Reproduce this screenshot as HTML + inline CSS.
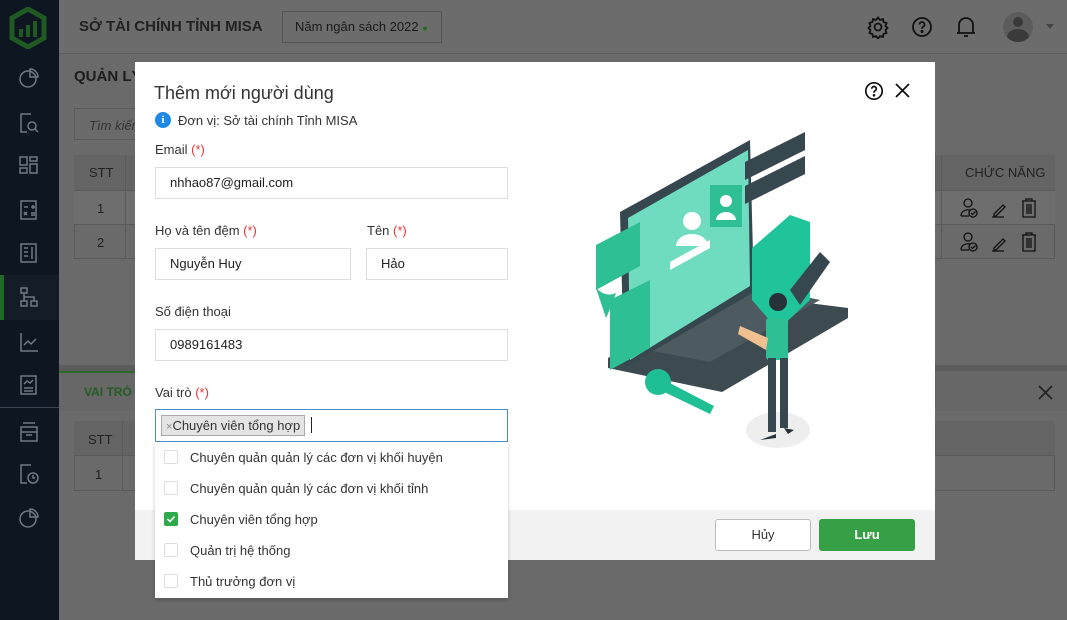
<!DOCTYPE html>
<html><head><meta charset="utf-8"><style>
*{box-sizing:border-box;margin:0;padding:0}
body{width:1067px;height:620px;overflow:hidden;position:relative;background:#6a6a6a;font-family:"Liberation Sans","Noto Sans CJK SC",sans-serif;color:#222}
.a{position:absolute}
.sb{left:0;top:0;width:59px;height:620px;background:#0e1622}
.ic{position:absolute;left:18px;width:22px;height:22px}
.hdr{left:59px;top:0;width:1008px;height:54px;background:#6c6c6c;border-bottom:1px solid #5e5e5e}
.modal{left:135px;top:62px;width:800px;height:498px;background:#fff}
.lbl{font-size:13px;color:#333}
.req{color:#e53935}
.inp{position:absolute;height:32px;border:1px solid #ddd;font-size:13px;padding-left:14px;line-height:30px;color:#222}
.dd{left:155px;top:442px;width:353px;height:156px;background:#fff;box-shadow:0 2px 4px rgba(0,0,0,.2)}
.opt{position:absolute;left:0;height:31px;width:100%;font-size:13px;color:#333;line-height:31px;padding-left:35px}
.cb{position:absolute;left:9px;top:8px;width:14px;height:14px;border:1px solid #ddd;border-radius:2px}
.btn{position:absolute;top:519px;width:96px;height:32px;border-radius:3px;font-size:13px;text-align:center;line-height:30px}
</style></head><body>
<div class="a sb">
 <svg class="a" style="left:9px;top:7px" width="38" height="42" viewBox="0 0 38 42"><path d="M19 2 L35 11 V31 L19 40 L3 31 V11 Z" fill="none" stroke="#1f5a22" stroke-width="5"/><path d="M12 30 V22 M19 30 V18 M26 30 V14" stroke="#1f5a22" stroke-width="4"/></svg>
 <g></g>
 <svg class="ic" style="top:67px" viewBox="0 0 22 22" fill="none" stroke="#6f7a84" stroke-width="1.5"><circle cx="10" cy="12" r="8"/><path d="M12 2 A8 8 0 0 1 20 10 H12Z"/></svg>
 <svg class="ic" style="top:112px" viewBox="0 0 22 22" fill="none" stroke="#6f7a84" stroke-width="1.5"><path d="M13 2H3V20H9"/><circle cx="14" cy="14" r="4"/><path d="M17 17L20 20"/></svg>
 <svg class="ic" style="top:155px" viewBox="0 0 22 22" fill="none" stroke="#6f7a84" stroke-width="1.5"><rect x="2" y="2" width="7" height="8"/><rect x="12" y="2" width="7" height="4"/><rect x="2" y="13" width="7" height="5"/><rect x="12" y="9" width="7" height="9"/></svg>
 <svg class="ic" style="top:199px" viewBox="0 0 22 22" fill="none" stroke="#6f7a84" stroke-width="1.5"><rect x="3" y="2" width="15" height="18"/><path d="M6 8h4M13 8h4M15 6v4M6 13l3 3M9 13l-3 3M13 14h4M13 16h4"/></svg>
 <svg class="ic" style="top:242px" viewBox="0 0 22 22" fill="none" stroke="#6f7a84" stroke-width="1.5"><rect x="3" y="2" width="15" height="18"/><path d="M6 6h4M6 10h4M6 14h4M14 5v12"/></svg>
 <div class="a" style="left:0;top:275px;width:59px;height:45px;background:#141c28;border-left:4px solid #1f6a28"></div>
 <svg class="ic" style="top:286px" viewBox="0 0 22 22" fill="none" stroke="#6f7a84" stroke-width="1.5"><rect x="3" y="2" width="6" height="5"/><rect x="3" y="15" width="6" height="5"/><rect x="13" y="15" width="6" height="5"/><path d="M6 7v8M6 11h10v4"/></svg>
 <svg class="ic" style="top:331px" viewBox="0 0 22 22" fill="none" stroke="#6f7a84" stroke-width="1.5"><path d="M3 2V20H20M6 14l4-4 3 3 5-5"/></svg>
 <svg class="ic" style="top:374px" viewBox="0 0 22 22" fill="none" stroke="#6f7a84" stroke-width="1.5"><rect x="3" y="2" width="15" height="18"/><path d="M6 10l3-3 3 2 3-3M6 14h9M6 17h9"/></svg>
 <div class="a" style="left:0;top:407px;width:59px;height:1px;background:#3a4450"></div>
 <svg class="ic" style="top:421px" viewBox="0 0 22 22" fill="none" stroke="#6f7a84" stroke-width="1.5"><path d="M3 6h16v14H3zM5 2h12M3 11h16M8 14h6"/></svg>
 <svg class="ic" style="top:463px" viewBox="0 0 22 22" fill="none" stroke="#6f7a84" stroke-width="1.5"><path d="M13 2H3V20H9"/><circle cx="15" cy="15" r="5"/><path d="M15 12v3h2"/></svg>
 <svg class="ic" style="top:507px" viewBox="0 0 22 22" fill="none" stroke="#6f7a84" stroke-width="1.5"><circle cx="10" cy="12" r="8"/><path d="M12 2 A8 8 0 0 1 20 10 H12Z"/></svg>
</div>
<div class="a hdr"></div>
<div class="a" style="left:79px;top:18px;font-size:15px;font-weight:bold;color:#222">SỞ TÀI CHÍNH TỈNH MISA</div>
<div class="a" style="left:282px;top:11px;width:160px;height:32px;border:1px solid #555;font-size:13px;line-height:30px;padding-left:12px;color:#1a1a1a">Năm ngân sách 2022 <span style="color:#1f6a1f;font-size:9px">●</span></div>
<svg class="a" style="left:866px;top:15px" width="24" height="24" viewBox="0 0 24 24" fill="none" stroke="#111" stroke-width="1.8"><circle cx="12" cy="12" r="3.5"/><path d="M12 2.5l2 2.5 3-1 .5 3 3 1-1 3 2 2-2 2 1 3-3 1-.5 3-3-1-2 2.5-2-2.5-3 1-.5-3-3-1 1-3-2-2 2-2-1-3 3-1 .5-3 3 1z"/></svg>
<svg class="a" style="left:910px;top:15px" width="24" height="24" viewBox="0 0 24 24" fill="none" stroke="#111" stroke-width="1.8"><circle cx="12" cy="12" r="9"/><path d="M9.5 9.5a2.5 2.5 0 1 1 3.5 2.3c-.8.4-1 1-1 2"/><circle cx="12" cy="16.5" r=".6" fill="#111"/></svg>
<svg class="a" style="left:954px;top:14px" width="24" height="26" viewBox="0 0 24 26" fill="none" stroke="#111" stroke-width="1.8"><path d="M5 19V11a7 7 0 0 1 14 0v8H5zM3 19h18M10 22h4"/></svg>
<div class="a" style="left:1003px;top:12px;width:30px;height:30px;border-radius:50%;background:#5c5c5c;overflow:hidden"><div class="a" style="left:10px;top:5px;width:10px;height:10px;border-radius:50%;background:#3a3a3a"></div><div class="a" style="left:4px;top:17px;width:22px;height:16px;border-radius:50%;background:#3a3a3a"></div></div>
<div class="a" style="left:1046px;top:24px;border:4px solid transparent;border-top:5px solid #444"></div>
<div class="a" style="left:74px;top:68px;font-size:15px;font-weight:bold;color:#1d1d1d">QUẢN LÝ</div>
<div class="a" style="left:74px;top:108px;width:90px;height:32px;border:1px solid #5a5a5a;font-size:13px;font-style:italic;color:#333;padding:9px 14px;white-space:nowrap">Tìm kiếm</div>
<div class="a" style="left:74px;top:155px;width:981px;height:104px;border:1px solid #5a5a5a"></div>
<div class="a" style="left:74px;top:155px;width:981px;height:35px;background:#646464"></div>
<div class="a" style="left:74px;top:190px;width:981px;height:35px;background:#6e6e6e;border-top:1px solid #5a5a5a;border-bottom:1px solid #5a5a5a"></div>
<div class="a" style="left:125px;top:155px;width:1px;height:104px;background:#5a5a5a"></div>
<div class="a" style="left:941px;top:155px;width:1px;height:104px;background:#5a5a5a"></div>
<div class="a" style="left:89px;top:165px;font-size:13px;color:#222">STT</div>
<div class="a" style="left:97px;top:201px;font-size:13px;color:#222">1</div>
<div class="a" style="left:97px;top:235px;font-size:13px;color:#222">2</div>
<div class="a" style="left:965px;top:165px;font-size:13px;color:#222">CHỨC NĂNG</div>
<svg class="a" style="left:958px;top:196px" width="84" height="62" viewBox="0 0 84 62" fill="none" stroke="#111" stroke-width="1.3">
 <g id="r"><circle cx="10" cy="7" r="4"/><path d="M3 20a7 6 0 0 1 9-6"/><path d="M3 20h8"/><circle cx="15" cy="17" r="4"/><path d="M13 17l1.5 1.5 3-3"/>
 <path d="M36 18l9-9 2 2-9 9h-2z"/><path d="M34 21h12"/>
 <path d="M64 5h14M68 5v-2h6v2M65 5v16h12V5M69 8v10M71 8v10M73 8v10"/></g>
 <use href="#r" y="34"/>
</svg>
<div class="a" style="left:59px;top:365px;width:1008px;height:6px;background:#5c5c5c"></div>
<div class="a" style="left:59px;top:371px;width:1008px;height:40px;background:#676767"></div>
<div class="a" style="left:59px;top:371px;width:80px;height:2px;background:#2a6b2a"></div>
<div class="a" style="left:84px;top:385px;font-size:12px;font-weight:bold;color:#245c24">VAI TRÒ</div>
<svg class="a" style="left:1038px;top:385px" width="15" height="15" viewBox="0 0 15 15" stroke="#222" stroke-width="1.6"><path d="M1 1L14 14M14 1L1 14"/></svg>
<div class="a" style="left:74px;top:421px;width:981px;height:70px;border:1px solid #5a5a5a"></div>
<div class="a" style="left:74px;top:421px;width:981px;height:35px;background:#646464;border-bottom:1px solid #5a5a5a"></div>
<div class="a" style="left:122px;top:421px;width:1px;height:70px;background:#5a5a5a"></div>
<div class="a" style="left:88px;top:432px;font-size:13px;color:#222">STT</div>
<div class="a" style="left:95px;top:467px;font-size:13px;color:#222">1</div>

<div class="a modal"></div>
<div class="a" style="left:135px;top:510px;width:800px;height:50px;background:#f2f2f2"></div>
<div class="a" style="left:154px;top:83px;font-size:18px;color:#333">Thêm mới người dùng</div>
<svg class="a" style="left:864px;top:81px" width="20" height="20" viewBox="0 0 20 20" fill="none" stroke="#111" stroke-width="1.7"><circle cx="10" cy="10" r="8.2"/><path d="M7.7 7.8a2.3 2.3 0 1 1 3.2 2.1c-.7.3-.9.9-.9 1.8"/><circle cx="10" cy="14.3" r=".5" fill="#111"/></svg>
<svg class="a" style="left:894px;top:82px" width="17" height="17" viewBox="0 0 17 17" stroke="#111" stroke-width="1.8"><path d="M2 2L15 15M15 2L2 15"/></svg>
<div class="a" style="left:155px;top:112px;width:16px;height:16px;border-radius:50%;background:#1e88e5;color:#fff;font-size:11px;font-weight:bold;text-align:center;line-height:16px;font-family:'Liberation Serif',serif">i</div>
<div class="a lbl" style="left:178px;top:113px">Đơn vị: Sở tài chính Tỉnh MISA</div>
<div class="a lbl" style="left:155px;top:142px">Email <span class="req">(*)</span></div>
<div class="inp" style="left:155px;top:167px;width:353px">nhhao87@gmail.com</div>
<div class="a lbl" style="left:155px;top:223px">Họ và tên đệm <span class="req">(*)</span></div>
<div class="inp" style="left:155px;top:248px;width:196px">Nguyễn Huy</div>
<div class="a lbl" style="left:367px;top:223px">Tên <span class="req">(*)</span></div>
<div class="inp" style="left:366px;top:248px;width:142px">Hảo</div>
<div class="a lbl" style="left:155px;top:304px">Số điện thoại</div>
<div class="inp" style="left:155px;top:329px;width:353px">0989161483</div>
<div class="a lbl" style="left:155px;top:385px">Vai trò <span class="req">(*)</span></div>
<div class="a" style="left:155px;top:409px;width:353px;height:33px;border:1px solid #4a90c8"></div>
<div class="a" style="left:161px;top:415px;width:144px;height:21px;background:#e4e4e4;border:1px solid #aaa;font-size:13px;line-height:19px;padding-left:4px;color:#333"><span style="color:#888;font-size:11px">×</span>Chuyên viên tổng hợp</div>
<div class="a" style="left:311px;top:417px;width:1px;height:16px;background:#222"></div>
<div class="a dd">
 <div class="opt" style="top:0"><div class="cb"></div>Chuyên quản quản lý các đơn vị khối huyện</div>
 <div class="opt" style="top:31px"><div class="cb"></div>Chuyên quản quản lý các đơn vị khối tỉnh</div>
 <div class="opt" style="top:62px"><div class="cb" style="background:#2eaa4c;border-color:#2eaa4c"><svg width="12" height="12" viewBox="0 0 12 12" style="position:absolute;left:0;top:0"><path d="M2.5 6l2.5 2.5 4.5-5" stroke="#fff" stroke-width="1.5" fill="none"/></svg></div>Chuyên viên tổng hợp</div>
 <div class="opt" style="top:93px"><div class="cb"></div>Quản trị hệ thống</div>
 <div class="opt" style="top:124px"><div class="cb"></div>Thủ trưởng đơn vị</div>
</div>
<div class="btn" style="left:715px;background:#fff;border:1px solid #bbb;color:#333">Hủy</div>
<div class="btn" style="left:819px;background:#35a046;border:1px solid #35a046;color:#fff;font-weight:bold">Lưu</div>

<svg class="a" style="left:580px;top:130px" width="290" height="330" viewBox="580 130 290 330">
 <ellipse cx="778" cy="430" rx="32" ry="18" fill="#eee"/>
 <polygon points="608,358 722,292 848,308 848,318 722,392 608,368" fill="#3d4a50"/>
 <polygon points="622,345 735,282 820,300 710,362" fill="#4d5a60"/>
 <polygon points="620,212 750,140 754,292 624,368" fill="#37474f"/>
 <polygon points="628,218 748,150 750,286 630,360" fill="#6fdcc0"/>
 <polygon points="745,162 805,132 805,150 745,180" fill="#37474f"/>
 <polygon points="745,186 805,156 805,174 745,204" fill="#37474f"/>
 <rect x="710" y="185" width="32" height="42" fill="#2fbf94"/>
 <circle cx="726" cy="201" r="6" fill="#fff"/><path d="M716 220 a10 8 0 0 1 20 0z" fill="#fff"/>
 <circle cx="692" cy="221" r="9" fill="#fff"/><path d="M676 246 a16 12 0 0 1 32 0z" fill="#fff"/>
 <polygon points="670,262 710,240 710,248 670,270" fill="#fff"/>
 <polygon points="596,245 640,222 640,266 596,290" fill="#2fbf94"/>
 <polygon points="752,248 790,215 810,222 810,300 778,330 752,300" fill="#1fc49a"/>
 <polygon points="790,290 820,252 830,262 800,305" fill="#37474f"/>
 <polygon points="610,300 650,280 650,348 610,370" fill="#2fbf94"/>
 <path d="M596 288 q10 10 20 5 q-5 15 -10 25z" fill="#2fbf94"/>
 <circle cx="658" cy="382" r="13" fill="#1fbf94"/>
 <polygon points="664,380 714,406 710,414 660,390" fill="#1fbf94"/>
 <circle cx="778" cy="302" r="9" fill="#263238"/>
 <rect x="766" y="318" width="22" height="42" rx="3" fill="#2fbf94"/>
 <polygon points="740,326 768,338 766,350 738,334" fill="#f0c090"/>
 <rect x="768" y="358" width="8" height="74" fill="#37474f"/><rect x="780" y="358" width="8" height="70" fill="#37474f"/>
 <path d="M760 440 l16 -6 v4z M784 428 l10 2 -6 4z" fill="#263238"/>
</svg>
</body></html>
